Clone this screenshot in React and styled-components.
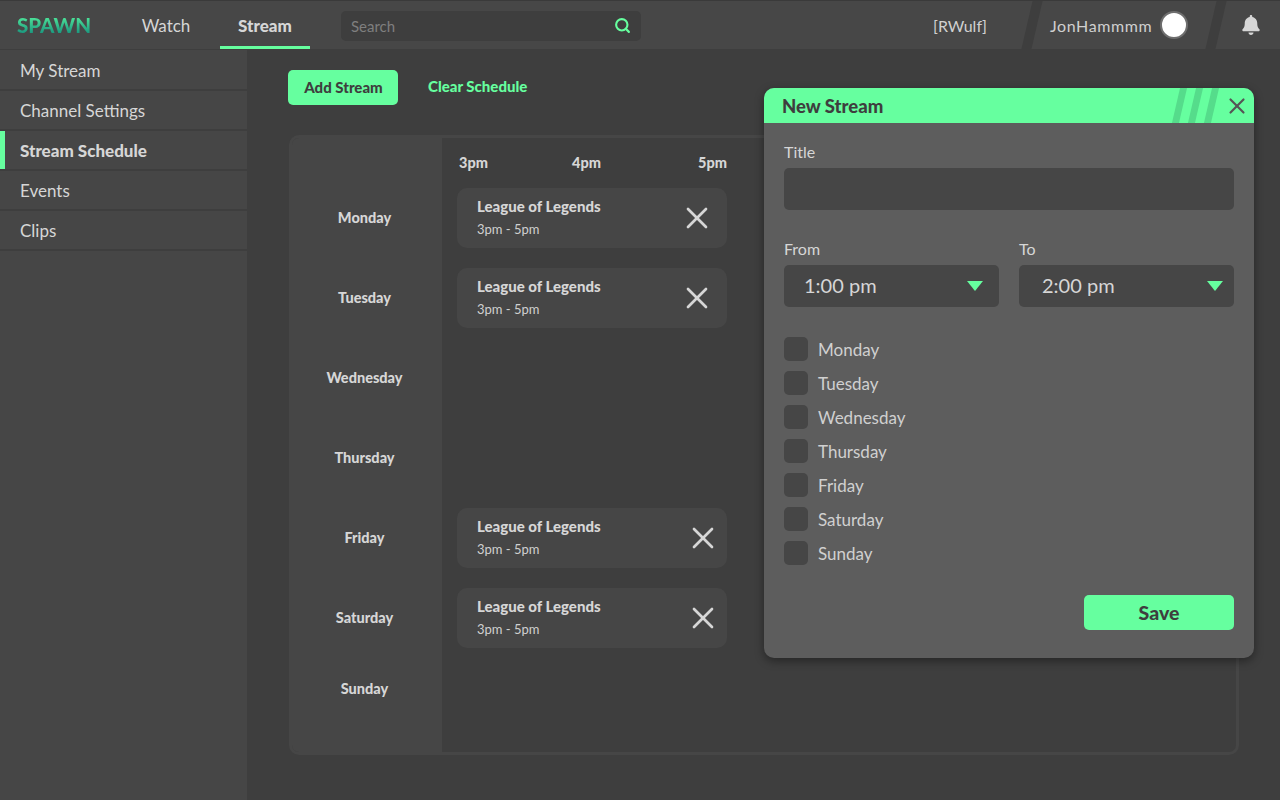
import React from 'react';
import styled, { createGlobalStyle } from 'styled-components';
import { X, Search } from 'lucide-react';
import { FaBell } from 'react-icons/fa';

const GlobalStyle = createGlobalStyle`
  * { box-sizing: border-box; }
  html, body { margin: 0; padding: 0; background: #3e3e3e; }
  body { font-family: "Lato", "Liberation Sans", sans-serif; color: #d6d6d6; }
`;

const Page = styled.div`
  position: relative;
  width: 1280px;
  height: 800px;
  overflow: hidden;
  background: #3e3e3e;
`;

const Header = styled.header`
  height: 50px;
  border-top: 1px solid #3a3a3a;
  border-bottom: 1px solid #3e3e3e;
  background: #474747;
  display: flex;
  align-items: center;
`;

const Logo = styled.div`
  width: 124px;
  padding-left: 17px;
  font-size: 20.5px;
  font-weight: 900;
  background: linear-gradient(180deg, #4fe79a 15%, #17907c 90%);
  background-clip: text;
  -webkit-background-clip: text;
  color: transparent;
`;

const Tabs = styled.div`
  height: 100%;
  display: flex;
  gap: 12px;
`;

const Tab = styled.div`
  height: 100%;
  width: ${p => p.$w}px;
  display: flex;
  align-items: center;
  justify-content: center;
  font-size: 17px;
  font-weight: ${p => (p.$active ? 900 : 400)};
  color: #d6d6d6;
  box-shadow: ${p => (p.$active ? 'inset 0 -3px 0 #66ff9f' : 'none')};
`;

const SearchBox = styled.div`
  width: 300px;
  height: 30px;
  margin: 1px 0 0 31px;
  padding: 0 10px;
  border-radius: 5px;
  background: #3e3e3e;
  display: flex;
  align-items: center;
  justify-content: space-between;
  color: #7f7f7f;
  font-size: 15px;
`;

const HeaderRight = styled.div`
  margin-left: auto;
  height: 100%;
  display: flex;
  align-items: stretch;
`;

const HeaderCell = styled.div`
  width: ${p => p.$w}px;
  padding-left: ${p => p.$pl}px;
  display: flex;
  align-items: center;
  gap: 8px;
  font-size: 16px;
  color: #d0d0d0;
`;

const UserName = styled.span`
  letter-spacing: 0.6px;
`;

const Slant = styled.div`
  width: 10px;
  background: #3e3e3e;
  transform: skewX(-13deg);
`;

const Avatar = styled.div`
  width: 28px;
  height: 28px;
  border-radius: 50%;
  background: #fff;
  border: 2px solid #6e6e6e;
`;

const Body = styled.div`
  display: flex;
  height: 750px;
`;

const Sidebar = styled.nav`
  width: 247px;
  padding-top: 1px;
  background: #464646;
  height: 100%;
`;

const SideItem = styled.div`
  height: 40px;
  padding-left: 20px;
  border-bottom: 2px solid #3e3e3e;
  display: flex;
  align-items: center;
  font-size: 17px;
  font-weight: ${p => (p.$active ? 900 : 400)};
  box-shadow: ${p => (p.$active ? 'inset 5px 0 0 #66ff9f' : 'none')};
`;

const Main = styled.main`
  flex: 1;
  padding: 20px 41px 0;
`;

const Actions = styled.div`
  display: flex;
  align-items: center;
  gap: 30px;
`;

const AddButton = styled.button`
  width: 110px;
  height: 35px;
  padding: 0 0 2px 1px;
  border: none;
  border-radius: 5px;
  background: #66ff9f;
  color: #3e3e3e;
  font-family: inherit;
  font-size: 15px;
  font-weight: 900;
`;

const ClearLink = styled.div`
  color: #66ff9f;
  font-size: 15px;
  font-weight: 900;
  margin-top: -3px;
`;

const Schedule = styled.section`
  width: 950px;
  height: 620px;
  margin-top: 30px;
  margin-left: 1px;
  border: 3px solid #464646;
  border-radius: 10px;
  display: flex;
  overflow: hidden;
`;

const DayColumn = styled.div`
  width: 150px;
  padding: 39px 5px 0 0;
  background: #464646;
`;

const DayLabel = styled.div`
  height: ${p => p.$h}px;
  display: flex;
  align-items: center;
  justify-content: center;
  font-size: 14.5px;
  font-weight: 900;
  color: #d6d6d6;
`;

const Timeline = styled.div`
  flex: 1;
  padding-left: 15px;
`;

const TimeRow = styled.div`
  width: 270px;
  height: 40px;
  padding-top: 8px;
  display: flex;
  align-items: center;
  font-size: 14.5px;
  font-weight: 900;
`;

const TimeLabel = styled.span`
  width: ${p => p.$w}px;
  padding-left: 2px;
`;

const SlotRow = styled.div`
  height: 80px;
  display: flex;
  align-items: center;
`;

const Card = styled.div`
  width: 270px;
  height: 60px;
  border-radius: 10px;
  background: #464646;
  padding-left: 20px;
  padding-right: ${p => p.$pr}px;
  display: flex;
  align-items: center;
  justify-content: space-between;
`;

const CardText = styled.div`
  margin-top: -3px;
`;

const CardTitle = styled.div`
  font-size: 15px;
  font-weight: 900;
  color: #d6d6d6;
`;

const CardTime = styled.div`
  margin-top: 6px;
  font-size: 13px;
  color: #d0d0d0;
`;

const Modal = styled.aside`
  position: absolute;
  left: 764px;
  top: 88px;
  width: 490px;
  height: 570px;
  border-radius: 10px;
  background: #5d5d5d;
  box-shadow: 0 3px 10px rgba(0, 0, 0, 0.4);
  overflow: hidden;
`;

const ModalHead = styled.div`
  height: 35px;
  padding: 0 4px 0 18px;
  background: #66ff9f;
  display: flex;
  align-items: center;
  color: #3e3e3e;
  font-size: 18.5px;
  font-weight: 900;
`;

const Stripes = styled.div`
  margin-left: auto;
  margin-right: 9px;
  height: 100%;
  display: flex;
  gap: 9px;
`;

const Stripe = styled.span`
  width: 7px;
  background: #55dc8b;
  transform: skewX(-13deg);
`;

const ModalBody = styled.div`
  padding: 20px 20px 0;
`;

const FieldLabel = styled.div`
  height: 19px;
  line-height: 17px;
  font-size: 16px;
  color: #d6d6d6;
`;

const TitleInput = styled.div`
  height: 42px;
  margin-top: 6px;
  border-radius: 5px;
  background: #464646;
`;

const TimeFields = styled.div`
  display: grid;
  grid-template-columns: 215px 215px;
  gap: 20px;
  margin-top: 30px;
`;

const Select = styled.div`
  height: 42px;
  margin-top: 6px;
  padding: 0 ${p => p.$pr}px 2px ${p => p.$pl}px;
  border-radius: 5px;
  background: #464646;
  display: flex;
  align-items: center;
  justify-content: space-between;
  font-size: 20px;
  color: #d6d6d6;
`;

const Caret = styled.span`
  width: 0;
  height: 0;
  margin-top: 2px;
  border-left: 8px solid transparent;
  border-right: 8px solid transparent;
  border-top: 10px solid #66ff9f;
`;

const Days = styled.div`
  margin-top: 30px;
  display: flex;
  flex-direction: column;
  gap: 10px;
`;

const DayCheck = styled.label`
  display: flex;
  align-items: center;
  gap: 10px;
  height: 24px;
  font-size: 17px;
  color: #d0d0d0;
`;

const Box = styled.span`
  width: 24px;
  height: 24px;
  border-radius: 5px;
  background: #464646;
`;

const SaveRow = styled.div`
  display: flex;
  justify-content: flex-end;
  margin-top: 30px;
`;

const SaveButton = styled.button`
  width: 150px;
  height: 35px;
  border: none;
  border-radius: 5px;
  background: #66ff9f;
  color: #3e3e3e;
  font-family: inherit;
  font-size: 19.5px;
  font-weight: 900;
`;

const sideItems = ['My Stream', 'Channel Settings', 'Stream Schedule', 'Events', 'Clips'];
const week = ['Monday', 'Tuesday', 'Wednesday', 'Thursday', 'Friday', 'Saturday', 'Sunday'];
const slots = [{ pr: 12 }, { pr: 12 }, null, null, { pr: 6 }, { pr: 6 }];

export default function App() {
  return (
    <Page>
      <GlobalStyle />
      <Header>
        <Logo>SPAWN</Logo>
        <Tabs>
          <Tab $w={84}>Watch</Tab>
          <Tab $w={90} $active>Stream</Tab>
        </Tabs>
        <SearchBox>
          Search
          <Search size={17} color="#66ff9f" strokeWidth={3} />
        </SearchBox>
        <HeaderRight>
          <HeaderCell $w={115} $pl={21}>[RWulf]</HeaderCell>
          <Slant />
          <HeaderCell $w={174} $pl={13}><UserName>JonHammmm</UserName> <Avatar /></HeaderCell>
          <Slant />
          <HeaderCell $w={59} $pl={20}><FaBell size={20} color="#d6d6d6" /></HeaderCell>
        </HeaderRight>
      </Header>
      <Body>
        <Sidebar>
          {sideItems.map(item => (
            <SideItem key={item} $active={item === 'Stream Schedule'}>{item}</SideItem>
          ))}
        </Sidebar>
        <Main>
          <Actions>
            <AddButton>Add Stream</AddButton>
            <ClearLink>Clear Schedule</ClearLink>
          </Actions>
          <Schedule>
            <DayColumn>
              {week.map(day => (
                <DayLabel key={day} $h={day === 'Sunday' ? 62 : 80}>{day}</DayLabel>
              ))}
            </DayColumn>
            <Timeline>
              <TimeRow>
                <TimeLabel $w={113}>3pm</TimeLabel>
                <TimeLabel $w={126}>4pm</TimeLabel>
                <TimeLabel $w={31}>5pm</TimeLabel>
              </TimeRow>
              {slots.map((slot, i) => (
                <SlotRow key={i}>
                  {slot && (
                    <Card $pr={slot.pr}>
                      <CardText>
                        <CardTitle>League of Legends</CardTitle>
                        <CardTime>3pm - 5pm</CardTime>
                      </CardText>
                      <X size={36} color="#d6d6d6" strokeWidth={1.8} />
                    </Card>
                  )}
                </SlotRow>
              ))}
            </Timeline>
          </Schedule>
        </Main>
      </Body>
      <Modal>
        <ModalHead>
          New Stream
          <Stripes>
            <Stripe />
            <Stripe />
            <Stripe />
          </Stripes>
          <X size={26} color="#555" strokeWidth={2} />
        </ModalHead>
        <ModalBody>
          <FieldLabel>Title</FieldLabel>
          <TitleInput />
          <TimeFields>
            <div>
              <FieldLabel>From</FieldLabel>
              <Select $pl={20} $pr={16}>1:00 pm <Caret /></Select>
            </div>
            <div>
              <FieldLabel>To</FieldLabel>
              <Select $pl={23} $pr={11}>2:00 pm <Caret /></Select>
            </div>
          </TimeFields>
          <Days>
            {week.map(day => (
              <DayCheck key={day}><Box />{day}</DayCheck>
            ))}
          </Days>
          <SaveRow>
            <SaveButton>Save</SaveButton>
          </SaveRow>
        </ModalBody>
      </Modal>
    </Page>
  );
}
